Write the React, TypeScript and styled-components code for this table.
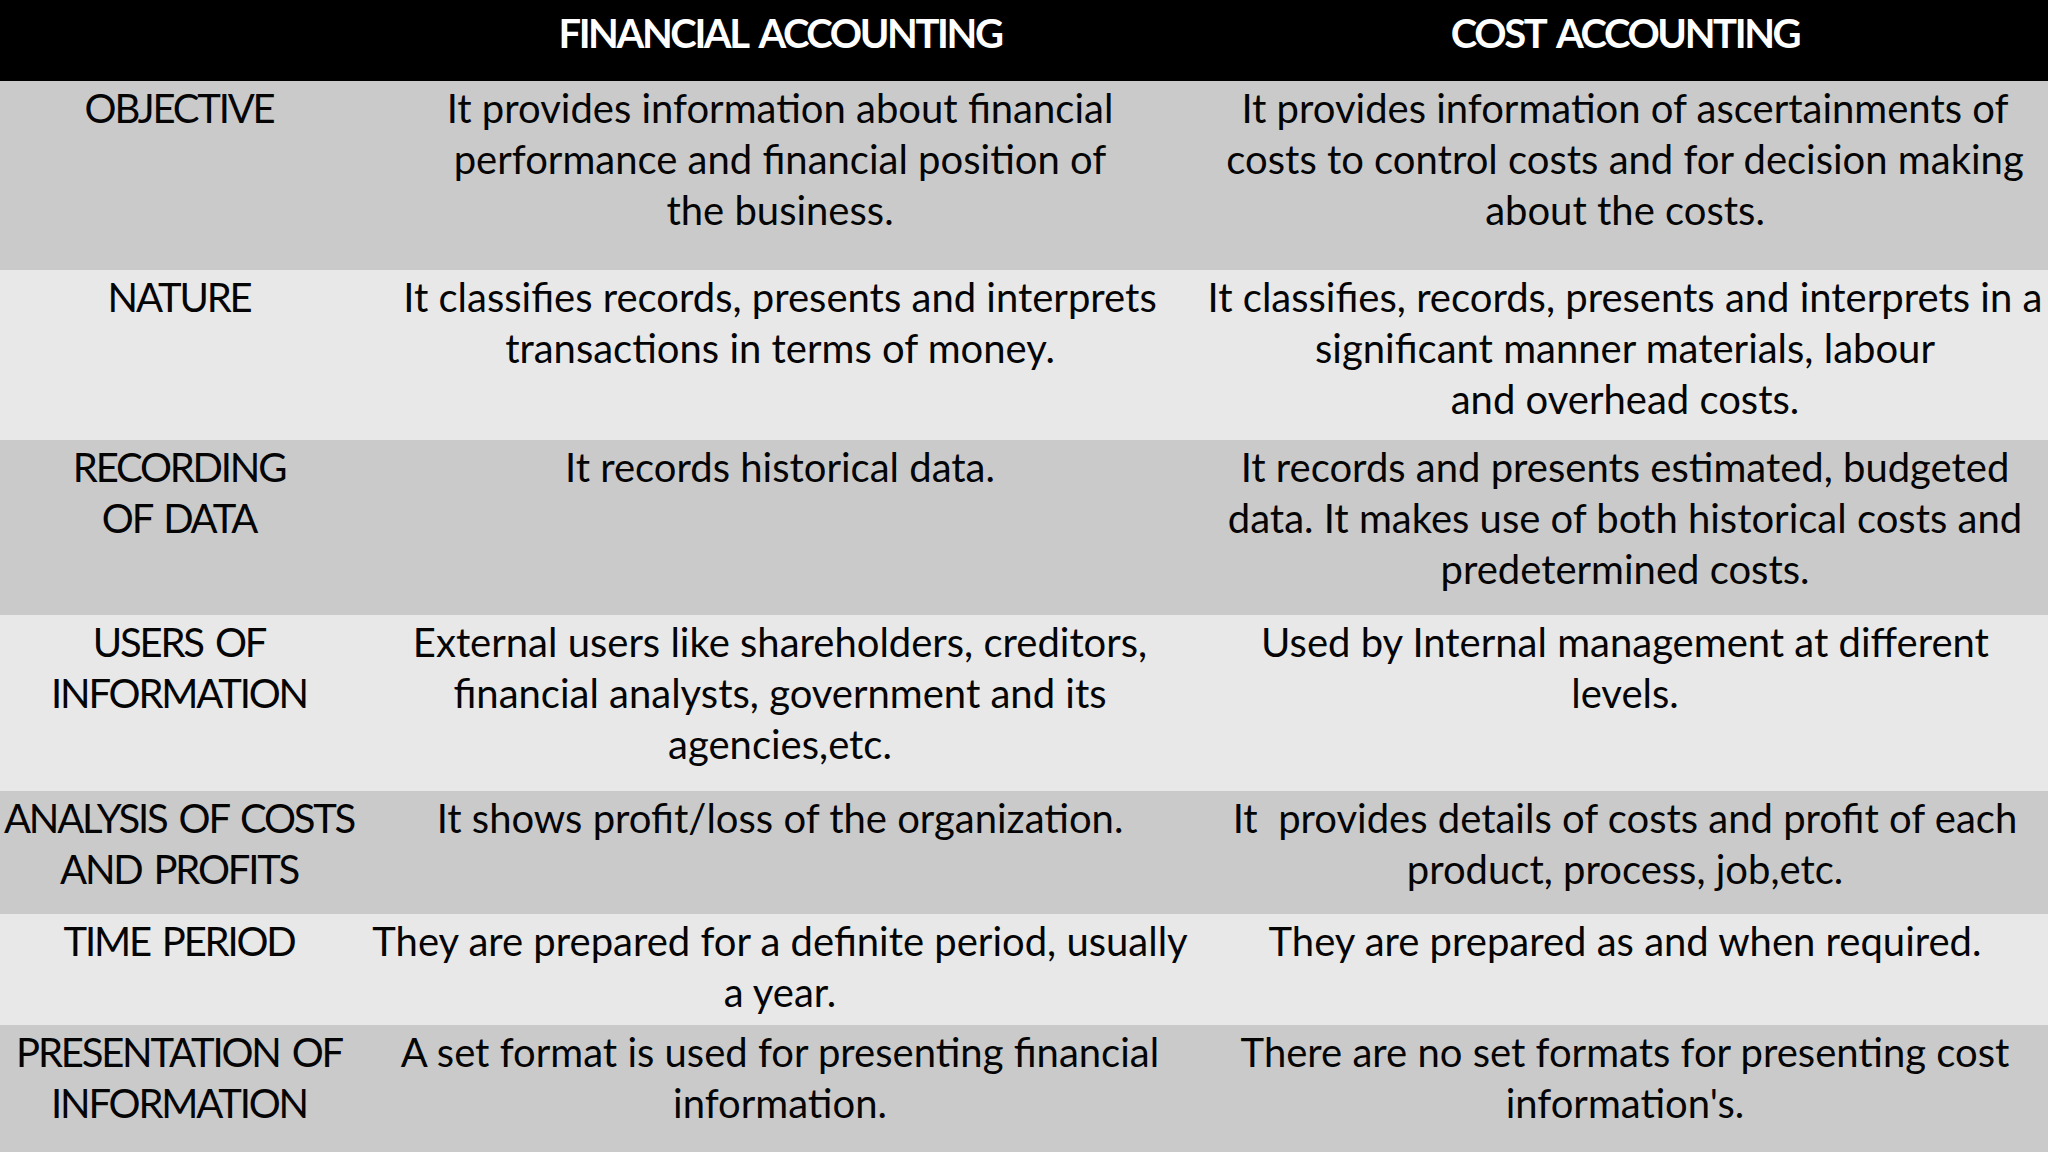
import React from "react";
import styled, { createGlobalStyle, css } from "styled-components";

const GlobalStyle = createGlobalStyle`
  html, body {
    margin: 0;
    padding: 0;
    background: #c9c9c9;
  }
  body {
    font-family: "Lato", "Open Sans", "DejaVu Sans", sans-serif;
    color: #000;
  }
`;

const Table = styled.div`
  width: 2048px;
  height: 1152px;
  overflow: hidden;
  display: flex;
  flex-direction: column;
`;

type Tone = "head" | "dark" | "light";
type Kind = "head" | "label" | "body";

const Row = styled.div<{ $h: number; $tone: Tone }>`
  display: grid;
  grid-template-columns: 358px 844px 1fr;
  height: ${(p) => p.$h}px;
  flex: none;
  background: ${(p) =>
    p.$tone === "head" ? "#000000" : p.$tone === "dark" ? "#cacaca" : "#e8e8e8"};
  color: ${(p) => (p.$tone === "head" ? "#ffffff" : "#050505")};
`;

const kindStyles: Record<Kind, ReturnType<typeof css>> = {
  head: css`
    padding-top: 8px;
    font-weight: 700;
    letter-spacing: -2.4px;
    word-spacing: 6px;
  `,
  label: css`
    padding-top: 2px;
    font-weight: 400;
    letter-spacing: -2.2px;
    word-spacing: 4px;
  `,
  body: css`
    padding-top: 2px;
    font-weight: 400;
    letter-spacing: 0px;
  `,
};

const Cell = styled.div<{ $kind: Kind }>`
  display: flex;
  flex-direction: column;
  align-items: center;
  font-size: 40px;
  line-height: 51px;
  text-align: center;
  white-space: pre;
  ${(p) => kindStyles[p.$kind]}
`;

const Line = styled.span`
  display: block;
`;

type RowData = {
  h: number;
  tone: "dark" | "light";
  cells: string[][];
};

const rows: RowData[] = [
  {
    h: 189,
    tone: "dark",
    cells: [
      ["OBJECTIVE"],
      [
        "It provides information about financial",
        "performance and financial position of",
        "the business.",
      ],
      [
        "It provides information of ascertainments of",
        "costs to control costs and for decision making",
        "about the costs.",
      ],
    ],
  },
  {
    h: 170,
    tone: "light",
    cells: [
      ["NATURE"],
      [
        "It classifies records, presents and interprets",
        "transactions in terms of money.",
      ],
      [
        "It classifies, records, presents and interprets in a",
        "significant manner materials, labour",
        "and overhead costs.",
      ],
    ],
  },
  {
    h: 175,
    tone: "dark",
    cells: [
      ["RECORDING", "OF DATA"],
      ["It records historical data."],
      [
        "It records and presents estimated, budgeted",
        "data. It makes use of both historical costs and",
        "predetermined costs.",
      ],
    ],
  },
  {
    h: 176,
    tone: "light",
    cells: [
      ["USERS OF", "INFORMATION"],
      [
        "External users like shareholders, creditors,",
        "financial analysts, government and its",
        "agencies,etc.",
      ],
      ["Used by Internal management at different", "levels."],
    ],
  },
  {
    h: 123,
    tone: "dark",
    cells: [
      ["ANALYSIS OF COSTS", "AND PROFITS"],
      ["It shows profit/loss of the organization."],
      [
        "It  provides details of costs and profit of each",
        "product, process, job,etc.",
      ],
    ],
  },
  {
    h: 111,
    tone: "light",
    cells: [
      ["TIME PERIOD"],
      ["They are prepared for a definite period, usually", "a year."],
      ["They are prepared as and when required."],
    ],
  },
  {
    h: 127,
    tone: "dark",
    cells: [
      ["PRESENTATION OF", "INFORMATION"],
      ["A set format is used for presenting financial", "information."],
      ["There are no set formats for presenting cost", "information's."],
    ],
  },
];

export default function App() {
  return (
    <>
      <GlobalStyle />
      <Table>
        <Row $h={81} $tone="head">
          <Cell $kind="head" />
          <Cell $kind="head">
            <Line>FINANCIAL ACCOUNTING</Line>
          </Cell>
          <Cell $kind="head">
            <Line>COST ACCOUNTING</Line>
          </Cell>
        </Row>
        {rows.map((r, i) => (
          <Row key={i} $h={r.h} $tone={r.tone}>
            {r.cells.map((lines, j) => (
              <Cell key={j} $kind={j === 0 ? "label" : "body"}>
                {lines.map((l, k) => (
                  <Line key={k}>{l}</Line>
                ))}
              </Cell>
            ))}
          </Row>
        ))}
      </Table>
    </>
  );
}
